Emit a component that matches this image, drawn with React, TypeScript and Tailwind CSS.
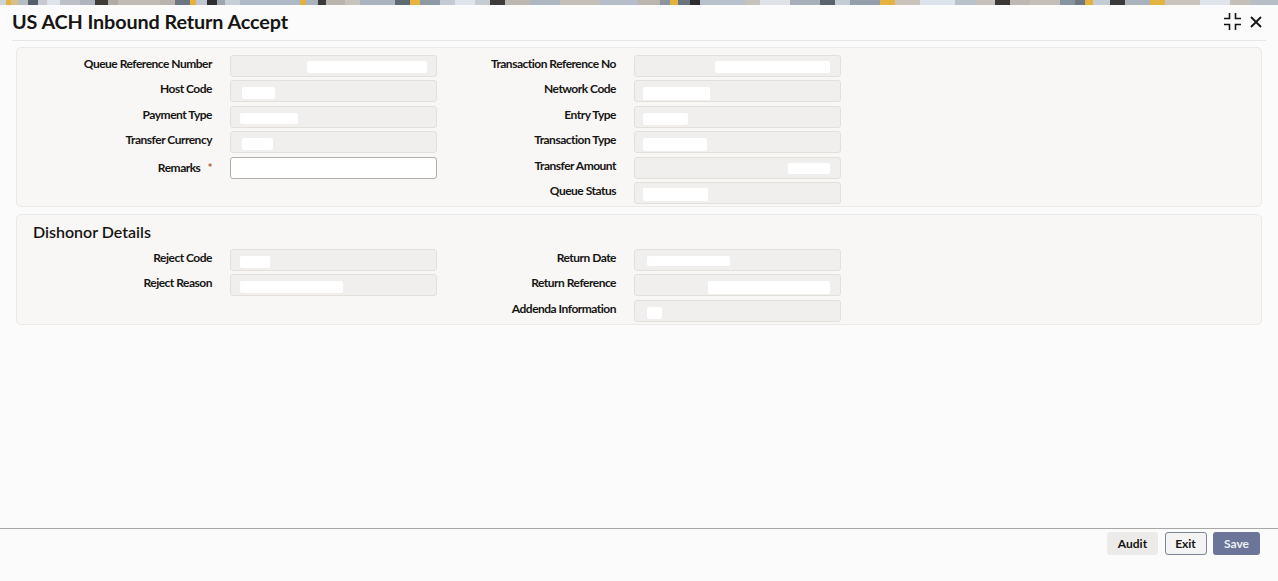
import React from 'react'

// decorative strip along the top edge: [start, end, colour]
const stripe: [number, number, string][] = [
  [0, 6, '#cfd3d8'], [6, 11, '#e2b446'], [11, 18, '#d8c08a'], [18, 28, '#b7bcc3'],
  [28, 38, '#55606b'], [38, 47, '#c7cbd1'], [47, 60, '#dfe3ea'], [60, 80, '#bdc1c7'],
  [80, 95, '#aeb4bc'], [95, 108, '#3e3b38'], [108, 118, '#b0aba5'], [118, 160, '#c2bcb6'],
  [160, 175, '#b8b3ad'], [175, 190, '#6c7580'], [190, 196, '#e5b23e'], [196, 207, '#bfc6d0'],
  [207, 217, '#2f2f2f'], [217, 225, '#9ea6b0'], [225, 240, '#c8ced6'], [240, 300, '#aeb8c6'],
  [300, 306, '#e1b13d'], [306, 318, '#aab2bd'], [318, 326, '#3b3b3b'], [326, 345, '#b9b4ad'],
  [345, 360, '#c7c3bd'], [360, 395, '#aab3bf'], [395, 410, '#5f6873'], [410, 420, '#e7b33e'],
  [420, 440, '#8e99a6'], [440, 455, '#c4cad3'], [455, 475, '#dfe4ea'], [475, 490, '#c7ccd3'],
  [490, 505, '#3e3c3a'], [505, 530, '#bdb7b1'], [530, 560, '#aeb6c0'], [560, 600, '#c4bfb9'],
  [600, 638, '#b5bdc8'], [638, 660, '#bcb6b0'], [660, 670, '#8b95a2'], [670, 678, '#e3b13c'],
  [678, 690, '#6a737e'], [690, 700, '#2e2e2e'], [700, 745, '#b8c0cb'], [745, 760, '#c7c2bb'],
  [760, 790, '#dfe3e8'], [790, 820, '#a6afba'], [820, 835, '#5a636e'], [835, 850, '#c6ccd4'],
  [850, 880, '#959fab'], [880, 895, '#e3b23f'], [895, 920, '#c9c3bc'], [920, 955, '#dde3eb'],
  [955, 975, '#b9c1cb'], [975, 995, '#c5c0ba'], [995, 1010, '#3b3937'], [1010, 1030, '#bdb8b2'],
  [1030, 1060, '#c4bfb9'], [1060, 1075, '#8893a0'], [1075, 1085, '#6e7782'], [1085, 1093, '#e4b33f'],
  [1093, 1110, '#c5cbd3'], [1110, 1125, '#3a3a3a'], [1125, 1150, '#aab2bc'], [1150, 1165, '#e1b53f'],
  [1165, 1200, '#c9c4be'], [1200, 1230, '#dfe3ea'], [1230, 1250, '#c4bfb9'], [1250, 1278, '#b8bec6'],
]

type Field = {
  label: string
  blot?: string
  required?: boolean
  editable?: boolean
}

const mainLeft: Field[] = [
  { label: 'Queue Reference Number', blot: 'left-[76px] top-[5px] w-[120px] h-[12px]' },
  { label: 'Host Code', blot: 'left-[11px] top-[6px] w-[33px] h-[12px]' },
  { label: 'Payment Type', blot: 'left-[9px] top-[6px] w-[58px] h-[11px]' },
  { label: 'Transfer Currency', blot: 'left-[11px] top-[6px] w-[31px] h-[12px]' },
  { label: 'Remarks', required: true, editable: true },
]

const mainRight: Field[] = [
  { label: 'Transaction Reference No', blot: 'left-[80px] top-[5px] w-[115px] h-[12px]' },
  { label: 'Network Code', blot: 'left-[8px] top-[6px] w-[67px] h-[13px]' },
  { label: 'Entry Type', blot: 'left-[8px] top-[6px] w-[45px] h-[12px]' },
  { label: 'Transaction Type', blot: 'left-[8px] top-[6px] w-[64px] h-[13px]' },
  { label: 'Transfer Amount', blot: 'left-[153px] top-[5px] w-[42px] h-[11px]' },
  { label: 'Queue Status', blot: 'left-[8px] top-[5px] w-[65px] h-[13px]' },
]

const dishonorLeft: Field[] = [
  { label: 'Reject Code', blot: 'left-[9px] top-[6px] w-[30px] h-[12px]' },
  { label: 'Reject Reason', blot: 'left-[9px] top-[6px] w-[103px] h-[12px]' },
]

const dishonorRight: Field[] = [
  { label: 'Return Date', blot: 'left-[12px] top-[6px] w-[83px] h-[10px]' },
  { label: 'Return Reference', blot: 'left-[73px] top-[6px] w-[122px] h-[13px]' },
  { label: 'Addenda Information', blot: 'left-[12px] top-[6px] w-[15px] h-[12px]' },
]

function Row({ field, labelWidth }: { field: Field; labelWidth: string }) {
  return (
    <div className="flex items-start h-[22px]">
      <div
        className={`${labelWidth} shrink-0 pr-[18px] text-right text-[12px] leading-[16px] font-bold tracking-[-0.5px] text-[#161513] ${
          field.editable ? 'pt-[3px]' : 'pt-[1px]'
        }`}
      >
        {field.label}
        {field.required && <span className="ml-[7px] text-[#a8623a]">*</span>}
      </div>
      {field.editable ? (
        <div className="w-[207px] h-[22px] bg-white border border-[#b3aea8] rounded-[3px]" />
      ) : (
        <div className="relative w-[207px] h-[22px] bg-[#f1efed] border border-[#e3e0dc] rounded-[3px]">
          {field.blot && <div className={`absolute bg-white rounded-[2px] ${field.blot}`} />}
        </div>
      )}
    </div>
  )
}

function Column({ fields, labelWidth }: { fields: Field[]; labelWidth: string }) {
  return (
    <div className="flex flex-col gap-[3.4px]">
      {fields.map((f) => (
        <Row key={f.label} field={f} labelWidth={labelWidth} />
      ))}
    </div>
  )
}

function CollapseIcon() {
  return (
    <svg width="17" height="17" viewBox="0 0 17 17" fill="none" stroke="#161513" strokeWidth="1.6">
      <path d="M5.5 0v5.5H0" />
      <path d="M11.5 0v5.5H17" />
      <path d="M5.5 17v-5.5H0" />
      <path d="M11.5 17v-5.5H17" />
    </svg>
  )
}

function CloseIcon() {
  return (
    <svg width="12" height="12" viewBox="0 0 12 12" fill="none" stroke="#161513" strokeWidth="1.8">
      <path d="M1 1l10 10M11 1L1 11" />
    </svg>
  )
}

export default function App() {
  return (
    <div className="flex flex-col min-h-[581px] bg-[#fbfbfb] font-['Lato','Liberation_Sans',sans-serif] text-[#161513]">
      <svg width="1278" height="5" className="block shrink-0">
        {stripe.map(([a, b, c]) => (
          <rect key={a} x={a} y={0} width={b - a} height={5} fill={c} />
        ))}
      </svg>

      {/* header */}
      <div className="mx-[12px] h-[36px] flex items-center justify-between border-b border-[#e8e6e4]">
        <h1 className="text-[19.8px] font-bold leading-none tracking-[-0.1px] pb-[1px]">US ACH Inbound Return Accept</h1>
        <div className="flex items-center gap-[9px] pr-[4px] pb-[2px]">
          <CollapseIcon />
          <CloseIcon />
        </div>
      </div>

      {/* main details */}
      <div className="mx-[16px] mt-[6px] bg-[#f8f7f6] border border-[#ebe8e5] rounded-[5px] flex pt-[7px] pb-[2px]">
        <Column fields={mainLeft} labelWidth="w-[213px]" />
        <Column fields={mainRight} labelWidth="w-[197px]" />
      </div>

      {/* dishonor details */}
      <div className="mx-[16px] mt-[7px] bg-[#f8f7f6] border border-[#ebe8e5] rounded-[5px] pt-[7px] pb-[2px]">
        <h2 className="pl-[16px] h-[20px] leading-[20px] text-[16px] font-semibold">Dishonor Details</h2>
        <div className="flex mt-[7px]">
          <Column fields={dishonorLeft} labelWidth="w-[213px]" />
          <Column fields={dishonorRight} labelWidth="w-[197px]" />
        </div>
      </div>

      <div className="flex-1" />

      {/* footer actions */}
      <div className="h-[53px] border-t border-[#a6a6a6] flex justify-end items-start gap-[6.5px] pt-[3px] pr-[18px]">
        <button className="w-[51px] h-[23px] rounded-[3px] bg-[#edebe9] text-[12px] font-bold">Audit</button>
        <button className="w-[42px] h-[23px] rounded-[3px] bg-[#f4f4f4] border border-[#7c8596] text-[12px] font-bold">Exit</button>
        <button className="w-[47px] h-[23px] rounded-[3px] bg-[#6b7599] text-[#eef0f5] text-[12px] font-bold">Save</button>
      </div>
    </div>
  )
}
